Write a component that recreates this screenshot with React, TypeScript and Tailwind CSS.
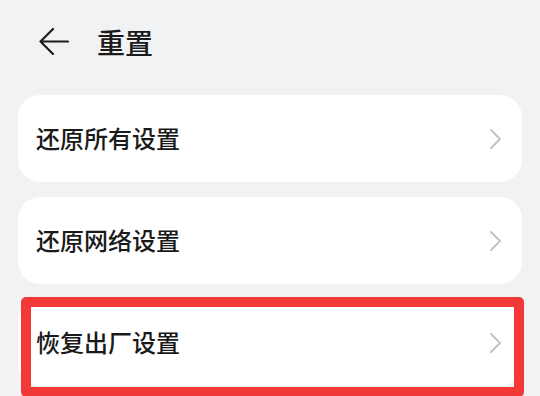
import { useState } from "react";

const items = ["还原所有设置", "还原网络设置", "恢复出厂设置"];

function BackArrow() {
  return (
    <svg width="30" height="27" viewBox="0 0 30 27" fill="none">
      <path
        d="M29 13.5H2M14 1L1.5 13.5L14 26"
        stroke="#1c1c1c"
        strokeWidth="2.2"
        strokeLinecap="round"
        strokeLinejoin="round"
      />
    </svg>
  );
}

function Chevron() {
  return (
    <svg width="11" height="20" viewBox="0 0 11 20" fill="none">
      <path
        d="M1 1L10 10L1 19"
        stroke="#c4c4c6"
        strokeWidth="2"
        strokeLinecap="round"
        strokeLinejoin="round"
      />
    </svg>
  );
}

export default function App() {
  const [highlighted] = useState(2);

  return (
    <div
      className="h-[396px] w-[540px] overflow-hidden bg-[#f1f2f4] text-[#1a1a1a]"
      style={{ fontFamily: '"Noto Sans CJK SC", "Noto Sans", sans-serif' }}
    >
      <header className="flex h-[82px] items-center pl-[39px]">
        <BackArrow />
        <h1 className="ml-[28px] mt-[2px] text-[28px] font-medium leading-none">
          重置
        </h1>
      </header>

      <div className="mt-[13px] flex flex-col gap-[15px] px-[18px]">
        {items.map((label, i) => (
          <div
            key={label}
            className="relative flex h-[87px] items-center justify-between rounded-[22px] bg-white pl-[18px] pr-[21px]"
          >
            <span className="mt-[-1px] text-[24px] font-medium leading-none">
              {label}
            </span>
            <Chevron />
            {i === highlighted ? (
              <div className="pointer-events-none absolute left-[3px] top-[-2px] h-[100px] w-[503px] rounded-[5px] border-[10px] border-[#f33838]" />
            ) : null}
          </div>
        ))}
      </div>
    </div>
  );
}
